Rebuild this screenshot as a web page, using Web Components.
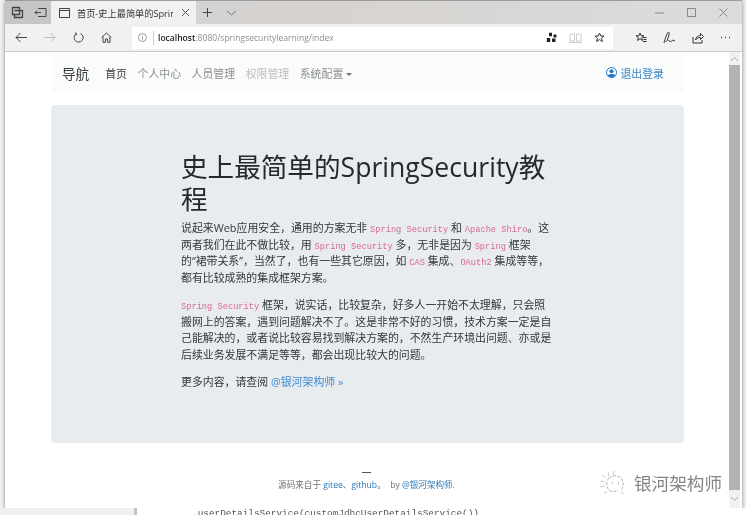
<!DOCTYPE html>
<html lang="zh">
<head>
<meta charset="utf-8">
<title>首页-史上最简单的SpringSecurity教程</title>
<style>
  html, body { margin: 0; height: 100%; overflow: hidden; background: #f1f1f1; }
  body { font-family: "Open Sans", "Noto Sans CJK SC", sans-serif; color: #2b2f33; filter: blur(.3px); }
</style>
</head>
<body>
<browser-window>
  <tab-strip slot="top"></tab-strip>
  <address-bar slot="top"></address-bar>
  <site-nav></site-nav>
  <hero-panel></hero-panel>
  <site-footer></site-footer>
</browser-window>
<code-peek></code-peek>
<wx-mark></wx-mark>

<script>
class BrowserWindow extends HTMLElement {
  connectedCallback() {
    this.attachShadow({ mode: 'open' });
    this.shadowRoot.innerHTML = `
      <style>
        :host {
          display: flex;
          flex-direction: column;
          width: 737px;
          height: 508px;
          margin-left: 5px;
          background: #fff;
          box-shadow: 0 1px 4px rgba(0, 0, 0, 0.45);
        }
        .view { flex: 1; display: flex; min-height: 0; }
        .page { flex: 1; min-width: 0; }
        .bar {
          width: 11px;
          margin-right: 2px;
          display: flex;
          flex-direction: column;
          background: #f1f1f1;
        }
        .arrow { height: 13px; display: flex; align-items: center; justify-content: center; }
        .thumb { flex: 1; background: #b3b3b3; }
      </style>
      <slot name="top"></slot>
      <div class="view">
        <div class="page"><slot></slot></div>
        <div class="bar">
          <div class="arrow"><svg width="9" height="6" viewBox="0 0 9 6" fill="none" stroke="#a8a8a8"><path d="M1 5l3.5-3.5L8 5"/></svg></div>
          <div class="thumb"></div>
          <div class="arrow" style="height:18px"><svg width="9" height="6" viewBox="0 0 9 6" fill="none" stroke="#a8a8a8"><path d="M1 1l3.5 3.5L8 1"/></svg></div>
        </div>
      </div>
    `;
  }
}

class TabStrip extends HTMLElement {
  connectedCallback() {
    this.attachShadow({ mode: 'open' });
    this.shadowRoot.innerHTML = `
      <style>
        :host {
          display: flex;
          height: 24px;
          background: linear-gradient(90deg, #d2d2d2, #d6d3d0 45%, #dcdcdc);
          border-top: 1px solid #9c9c9c;
          box-sizing: border-box;
          align-items: stretch;
          color: #333;
        }
        .left {
          width: 46px;
          display: flex;
          align-items: center;
          gap: 10px;
          padding-left: 6px;
          box-sizing: border-box;
          background: #c6c6c6;
        }
        .tab {
          width: 145px;
          background: #f1f1f1;
          display: flex;
          align-items: center;
          padding-left: 8px;
          box-sizing: border-box;
          font-size: 9.2px;
          color: #333;
        }
        .name { width: 96px; margin-left: 7px; overflow: hidden; white-space: nowrap; }
        .close { margin-left: 8px; }
        .more { display: flex; align-items: center; gap: 13px; padding-left: 6px; }
        .win { margin-left: auto; display: flex; align-items: center; gap: 23px; padding-right: 14px; }
        svg { display: block; fill: none; stroke: #444; }
      </style>
      <div class="left">
        <svg width="13" height="13" viewBox="0 0 13 13" stroke-width="1.3"><path d="M1.5 1.5h7v3h3v7h-8v-3h-2zM3.5 4.5h5v4h-5"/></svg>
        <svg width="13" height="11" viewBox="0 0 13 11"><path d="M4 1.5h8v8H4M7 5.5H1M3 3.5l-2 2 2 2"/></svg>
      </div>
      <div class="tab">
        <svg width="11" height="10" viewBox="0 0 11 10"><path d="M.5.5h10v9H.5zM.5 2.5h10"/></svg>
        <span class="name">首页-史上最简单的SpringSecurity教程</span>
        <svg class="close" width="9" height="9" viewBox="0 0 9 9" stroke-width="0.9"><path d="M1 1l7 7M8 1L1 8"/></svg>
      </div>
      <div class="more">
        <svg width="11" height="11" viewBox="0 0 11 11"><path d="M5.5 1v9M1 5.5h9"/></svg>
        <svg width="11" height="6" viewBox="0 0 11 6" stroke="#777"><path d="M1 1l4.5 4L10 1" stroke="#777"/></svg>
      </div>
      <div class="win">
        <svg width="9" height="2" viewBox="0 0 9 2"><path d="M0 1h9" stroke="#888"/></svg>
        <svg width="9" height="9" viewBox="0 0 9 9"><path d="M.5.5h8v8h-8z" stroke="#888"/></svg>
        <svg width="9" height="9" viewBox="0 0 9 9"><path d="M.5.5l8 8M8.5.5l-8 8" stroke="#888"/></svg>
      </div>
    `;
  }
}

class AddressBar extends HTMLElement {
  connectedCallback() {
    this.attachShadow({ mode: 'open' });
    this.shadowRoot.innerHTML = `
      <style>
        :host {
          display: flex;
          align-items: center;
          height: 28px;
          background: #f1f1f1;
          border-bottom: 1px solid #c9c9c9;
          box-sizing: border-box;
          padding-left: 10px;
        }
        svg { display: block; fill: none; stroke: #444; }
        .nav { display: flex; align-items: center; gap: 17px; width: 117px; flex: none; }
        .url {
          width: 481px;
          height: 22px;
          background: #fff;
          flex: none;
          display: flex;
          align-items: center;
          box-sizing: border-box;
          padding-left: 6px;
          font-size: 8.55px;
          color: #8a8f94;
        }
        .url b { font-weight: 600; color: #222; }
        .sep { width: 1px; height: 14px; background: #ccc; margin: 0 4px 0 6px; }
        .in { margin-left: auto; display: flex; align-items: center; gap: 12px; padding-right: 8px; }
        .out { display: flex; align-items: center; gap: 16px; padding-left: 22px; }
      </style>
      <div class="nav">
        <svg width="12" height="11" viewBox="0 0 12 11"><path d="M12 5.5H1M5.5 1L1 5.5 5.5 10"/></svg>
        <svg width="12" height="11" viewBox="0 0 12 11"><path d="M0 5.5h11M6.5 1L11 5.5 6.5 10" stroke="#bbb"/></svg>
        <svg width="11" height="11" viewBox="0 0 11 11"><path d="M3.5 1.6A4.5 4.5 0 1 0 7.5 1.5M3.5 1.6L2 .5M3.5 1.6L3 3.4"/></svg>
        <svg width="11" height="11" viewBox="0 0 11 11"><path d="M.7 5.5L5.5 1l4.8 4.5M2 4.7v5.6h2.4V7h2.2v3.3H9V4.7"/></svg>
      </div>
      <div class="url">
        <svg width="9" height="9" viewBox="0 0 9 9"><circle cx="4.5" cy="4.5" r="4" stroke="#999"/><path d="M4.5 4v2.6M4.5 2.2v1" stroke="#999"/></svg>
        <span class="sep"></span>
        <span><b>localhost</b>:8080/springsecuritylearning/index</span>
        <div class="in">
          <svg width="11" height="11" viewBox="0 0 11 11"><path d="M3 .8h3v3.400H3zM7.500 2.500h3v3h-3zM.8 6h3.400v4H.8zM6 6.500h3.500v3.500H6z" fill="#222" stroke="none"/></svg>
          <svg width="13" height="10" viewBox="0 0 13 10"><path d="M1 1h4.500v7H1zM7.500 1H12v7H7.500zM0 9.500h13" stroke="#ccc"/></svg>
          <svg width="11" height="11" viewBox="0 0 11 11"><path d="M5.500 1l1.300 3h3.200L7.500 6.100l.9 3.400-2.900-1.900-2.900 1.900.9-3.400L1 4h3.200z" stroke="#333"/></svg>
        </div>
      </div>
      <div class="out">
        <svg width="12" height="11" viewBox="0 0 12 11"><path d="M5 1l1.100 2.700H9L6.700 5.500l.8 3L5 6.800 2.500 8.500l.8-3L1 3.700h2.900zM8 5.500h3.500M8.500 7.500h3M8 9.500h3.500" stroke="#333"/></svg>
        <svg width="13" height="13" viewBox="0 0 13 13"><path d="M1 12C2 8 4 2 5.500 1c1.500 0 0 6-1.500 8.500L2.500 11M5.500 9c1 2 2 2 3 1s2-1 3.500 0" stroke="#333"/></svg>
        <svg width="12" height="12" viewBox="0 0 12 12"><path d="M1 5v6h9V8M3.500 8c.5-3 2.500-4.500 5-4.500V1.500l3 3-3 3v-2C6 5.500 4.500 6.500 3.500 8z" stroke="#333"/></svg>
        <svg width="11" height="3" viewBox="0 0 11 3"><path d="M1 1.500h1M5 1.500h1M9 1.500h1" stroke="#444" stroke-width="1.300"/></svg>
      </div>
    `;
  }
}

class SiteNav extends HTMLElement {
  connectedCallback() {
    this.attachShadow({ mode: 'open' });
    this.shadowRoot.innerHTML = `
      <style>
        :host {
          display: flex;
          align-items: center;
          height: 39px;
          margin: 1px 45px 0 47px;
          padding: 0 20px 0 10px;
          background: #fafbfb;
          font-size: 10.900px;
          color: #8c8f92;
        }
        .brand { font-size: 13.600px; color: #3a3d40; margin-right: 16px; }
        .links { display: flex; gap: 10.500px; align-items: center; }
        .active { color: #3d4043; }
        .off { color: #bcbec0; }
        .caret {
          display: inline-block;
          margin-left: 3px;
          vertical-align: 2px;
          border-top: 3.500px solid #777;
          border-left: 3.500px solid transparent;
          border-right: 3.500px solid transparent;
        }
        .out {
          margin-left: auto;
          color: #3a84c8;
          display: flex;
          align-items: center;
          gap: 3px;
        }
        svg { display: block; }
      </style>
      <span class="brand">导航</span>
      <div class="links">
        <span class="active">首页</span>
        <span>个人中心</span>
        <span>人员管理</span>
        <span class="off">权限管理</span>
        <span>系统配置<i class="caret"></i></span>
      </div>
      <span class="out">
        <svg width="11" height="11" viewBox="0 0 11 11"><circle cx="5.500" cy="5.500" r="5" fill="#fff" stroke="#2474c8"/><circle cx="5.500" cy="4.200" r="2" fill="#2474c8"/><path d="M1.800 8.500c1-2 6.400-2 7.400 0-1.800 2.200-5.600 2.200-7.400 0z" fill="#2474c8"/></svg>
        退出登录
      </span>
    `;
  }
}

class HeroPanel extends HTMLElement {
  connectedCallback() {
    this.attachShadow({ mode: 'open' });
    this.shadowRoot.innerHTML = `
      <style>
        :host {
          display: block;
          height: 338px;
          margin: 13px 45px 0 46px;
          padding: 46px 0 0 130px;
          box-sizing: border-box;
          background: #e9ecef;
          border-radius: 4px;
          font-size: 10.900px;
          line-height: 16.500px;
          color: #33373b;
        }
        h1 {
          margin: 0 0 5px;
          font-size: 26.600px;
          line-height: 32px;
          font-weight: 400;
          color: #26292c;
          white-space: nowrap;
        }
        p { margin: 0 0 11px; white-space: nowrap; }
        code {
          font-family: "Liberation Mono", "DejaVu Sans Mono", monospace;
          font-size: 8.700px;
          line-height: 0;
          color: #d9669c;
        }
        a { color: #3f8ad0; text-decoration: none; }
      </style>
      <h1>史上最简单的SpringSecurity教<br>程</h1>
      <p>说起来Web应用安全，通用的方案无非 <code>Spring Security</code> 和 <code>Apache Shiro</code>。这<br>
      两者我们在此不做比较，用 <code>Spring Security</code> 多，无非是因为 <code>Spring</code> 框架<br>
      的“裙带关系”，当然了，也有一些其它原因，如 <code>CAS</code> 集成、<code>OAuth2</code> 集成等等，<br>
      都有比较成熟的集成框架方案。</p>
      <p><code>Spring Security</code> 框架，说实话，比较复杂，好多人一开始不太理解，只会照<br>
      搬网上的答案，遇到问题解决不了。这是非常不好的习惯，技术方案一定是自<br>
      己能解决的，或者说比较容易找到解决方案的，不然生产环境出问题、亦或是<br>
      后续业务发展不满足等等，都会出现比较大的问题。</p>
      <p>更多内容，请查阅 <a>@银河架构师 »</a></p>
    `;
  }
}

class SiteFooter extends HTMLElement {
  connectedCallback() {
    this.attachShadow({ mode: 'open' });
    this.shadowRoot.innerHTML = `
      <style>
        :host {
          display: flex;
          flex-direction: column;
          align-items: center;
          padding-top: 29px;
          margin-right: 1px;
          font-size: 8.600px;
          line-height: 12px;
          color: #6b7075;
        }
        i { display: block; width: 9px; height: 1px; background: #555; margin-bottom: 6px; }
        a { color: #2f78b8; text-decoration: none; }
      </style>
      <i></i>
      <span>源码来自于 <a>gitee</a>、<a>github</a>。&nbsp; by <a>@银河架构师</a>.</span>
    `;
  }
}

class CodePeek extends HTMLElement {
  connectedCallback() {
    this.attachShadow({ mode: 'open' });
    this.shadowRoot.innerHTML = `
      <style>
        :host {
          display: flex;
          height: 7px;
          overflow: hidden;
          background: #fff;
        }
        .gutter { width: 137px; flex: none; background: #efefef; border-right: 3px solid #c4c4c4; box-sizing: border-box; }
        pre {
          margin: 0 0 0 55px;
          font-family: "Liberation Mono", monospace;
          font-size: 9.400px;
          line-height: 11px;
          color: #555;
        }
      </style>
      <div class="gutter"></div>
      <pre>.userDetailsService(customJdbcUserDetailsService())</pre>
    `;
  }
}

class WxMark extends HTMLElement {
  connectedCallback() {
    this.attachShadow({ mode: 'open' });
    this.shadowRoot.innerHTML = `
      <style>
        :host {
          position: absolute;
          left: 599px;
          top: 470px;
          display: flex;
          align-items: center;
          gap: 6px;
          font-size: 17.600px;
          line-height: 26px;
          color: #858585;
        }
        svg { display: block; fill: none; stroke: #9a9a9a; stroke-width: .8; }
      </style>
      <svg width="29" height="26" viewBox="0 0 29 26">
        <path d="M10 8c3-3 9-3 12 0s3 10 0 12M10 8c-3 3-3 9 0 12 2 2 5 2 8 1" stroke-dasharray="3 1.500"/>
        <path d="M2 11l4 1M3 5l4 3M9 2l1 4M15 1l-1 4M1 17l5-1M22 22l3 2M8 21l-3 3" stroke="#bbb"/>
        <path d="M13 13h1M19 13h1" stroke="#555"/>
      </svg>
      <span>银河架构师</span>
    `;
  }
}

customElements.define('browser-window', BrowserWindow);
customElements.define('tab-strip', TabStrip);
customElements.define('address-bar', AddressBar);
customElements.define('site-nav', SiteNav);
customElements.define('hero-panel', HeroPanel);
customElements.define('site-footer', SiteFooter);
customElements.define('code-peek', CodePeek);
customElements.define('wx-mark', WxMark);
</script>
</body>
</html>
